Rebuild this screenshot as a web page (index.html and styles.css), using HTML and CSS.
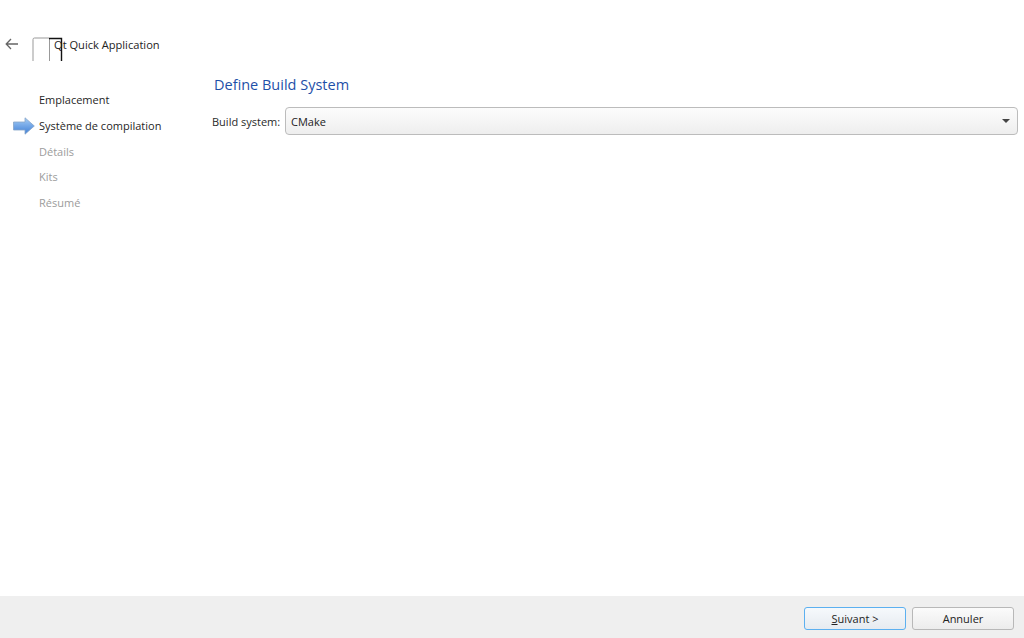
FILE: index.html
```html
<!DOCTYPE html>
<html lang="fr">
<head>
<meta charset="utf-8">
<title>Qt Quick Application</title>
<link rel="stylesheet" href="styles.css">
</head>
<body>
<div class="window">
  <header class="titlebar">
    <svg class="back" width="14" height="12" viewBox="0 0 14 12"><path d="M13 6H1.5M6 1 1.2 6 6 11" fill="none" stroke="#666" stroke-width="1.3"/></svg>
    <span class="logo">
      <svg width="32" height="26" viewBox="0 0 32 26"><path d="M1 25V2.5Q1 1 2.5 1H17" fill="none" stroke="#999" stroke-width="1"/><path d="M17.5 25V1" fill="none" stroke="#999" stroke-width="1"/><path d="M17 1.5H29.5V25" fill="none" stroke="#111" stroke-width="1.4"/></svg>
    </span>
    <span class="app-title">Qt Quick Application</span>
  </header>
  <div class="main">
    <nav class="steps">
      <div class="step done">Emplacement</div>
      <div class="step current">
        <svg class="arrow" width="22" height="18" viewBox="0 0 22 18"><defs><linearGradient id="ar" x1="0" y1="0" x2="0" y2="1"><stop offset="0" stop-color="#a6cdf6"/><stop offset="1" stop-color="#3f7fd6"/></linearGradient></defs><path d="M.5 5H12V.8L21.3 9 12 17.2V13H.5Z" fill="url(#ar)" stroke="#86a5c9" stroke-width=".8"/></svg>
        Système de compilation
      </div>
      <div class="step">Détails</div>
      <div class="step">Kits</div>
      <div class="step">Résumé</div>
    </nav>
    <section class="content">
      <h1 class="page-title">Define Build System</h1>
      <div class="field">
        <label class="field-label">Build system:</label>
        <div class="combo"><span>CMake</span><i class="caret"></i></div>
      </div>
    </section>
  </div>
  <footer class="footer">
    <button class="btn primary"><span class="ul">S</span>uivant &gt;</button>
    <button class="btn">Annuler</button>
  </footer>
</div>
</body>
</html>
```
FILE: styles.css
```css
* { box-sizing: border-box; }
html, body { margin: 0; height: 100%; }
body { background: #fff; font-family: "Open Sans", "Noto Sans", sans-serif; font-size: 11px; color: #1c1c1c; overflow: hidden; }
.window { width: 1024px; height: 638px; display: flex; flex-direction: column; }
.titlebar { height: 75px; padding: 37px 0 0 5px; display: flex; align-items: flex-start; flex: none; }
.back { margin-top: 1px; }
.logo { margin-left: 13px; height: 24px; overflow: hidden; }
.logo svg { display: block; }
.app-title { margin-left: -10px; line-height: 16px; font-size: 11.1px; color: #222; position: relative; }
.main { flex: 1; display: flex; min-height: 0; }
.steps { width: 214px; flex: none; padding-top: 12.4px; }
.step { height: 25.7px; line-height: 25.7px; padding-left: 39px; color: #9c9c9c; position: relative; }
.step.done, .step.current { color: #1f1f1f; }
.arrow { position: absolute; left: 13px; top: 4px; }
.content { flex: 1; padding: 0 6px 0 0; }
.page-title { margin: 0; font-size: 14.5px; font-weight: 400; line-height: 20px; color: #1e4fa8; }
.field { display: flex; align-items: center; margin-top: 12px; margin-left: -2px; }
.field-label { width: 73px; flex: none; color: #2a2a2a; }
.combo { flex: 1; height: 28px; border: 1px solid #bcbcbc; border-radius: 4px; background: linear-gradient(#fcfcfc, #eeeeee); display: flex; align-items: center; justify-content: space-between; padding: 0 7px 0 5px; color: #222; }
.caret { width: 0; height: 0; border-left: 4px solid transparent; border-right: 4px solid transparent; border-top: 4px solid #444; }
.footer { height: 42px; flex: none; background: #efefef; display: flex; justify-content: flex-end; gap: 6px; padding: 11px 10px 0 0; }
.btn { width: 102px; height: 23px; border: 1px solid #b8b8b8; border-radius: 3px; background: linear-gradient(#fbfbfb, #ececec); font: inherit; color: #222; padding: 0; }
.btn.primary { border-color: #5cb0f0; background: linear-gradient(#f6f9fc, #e6ebf0); }
.ul { text-decoration: underline; }
```
